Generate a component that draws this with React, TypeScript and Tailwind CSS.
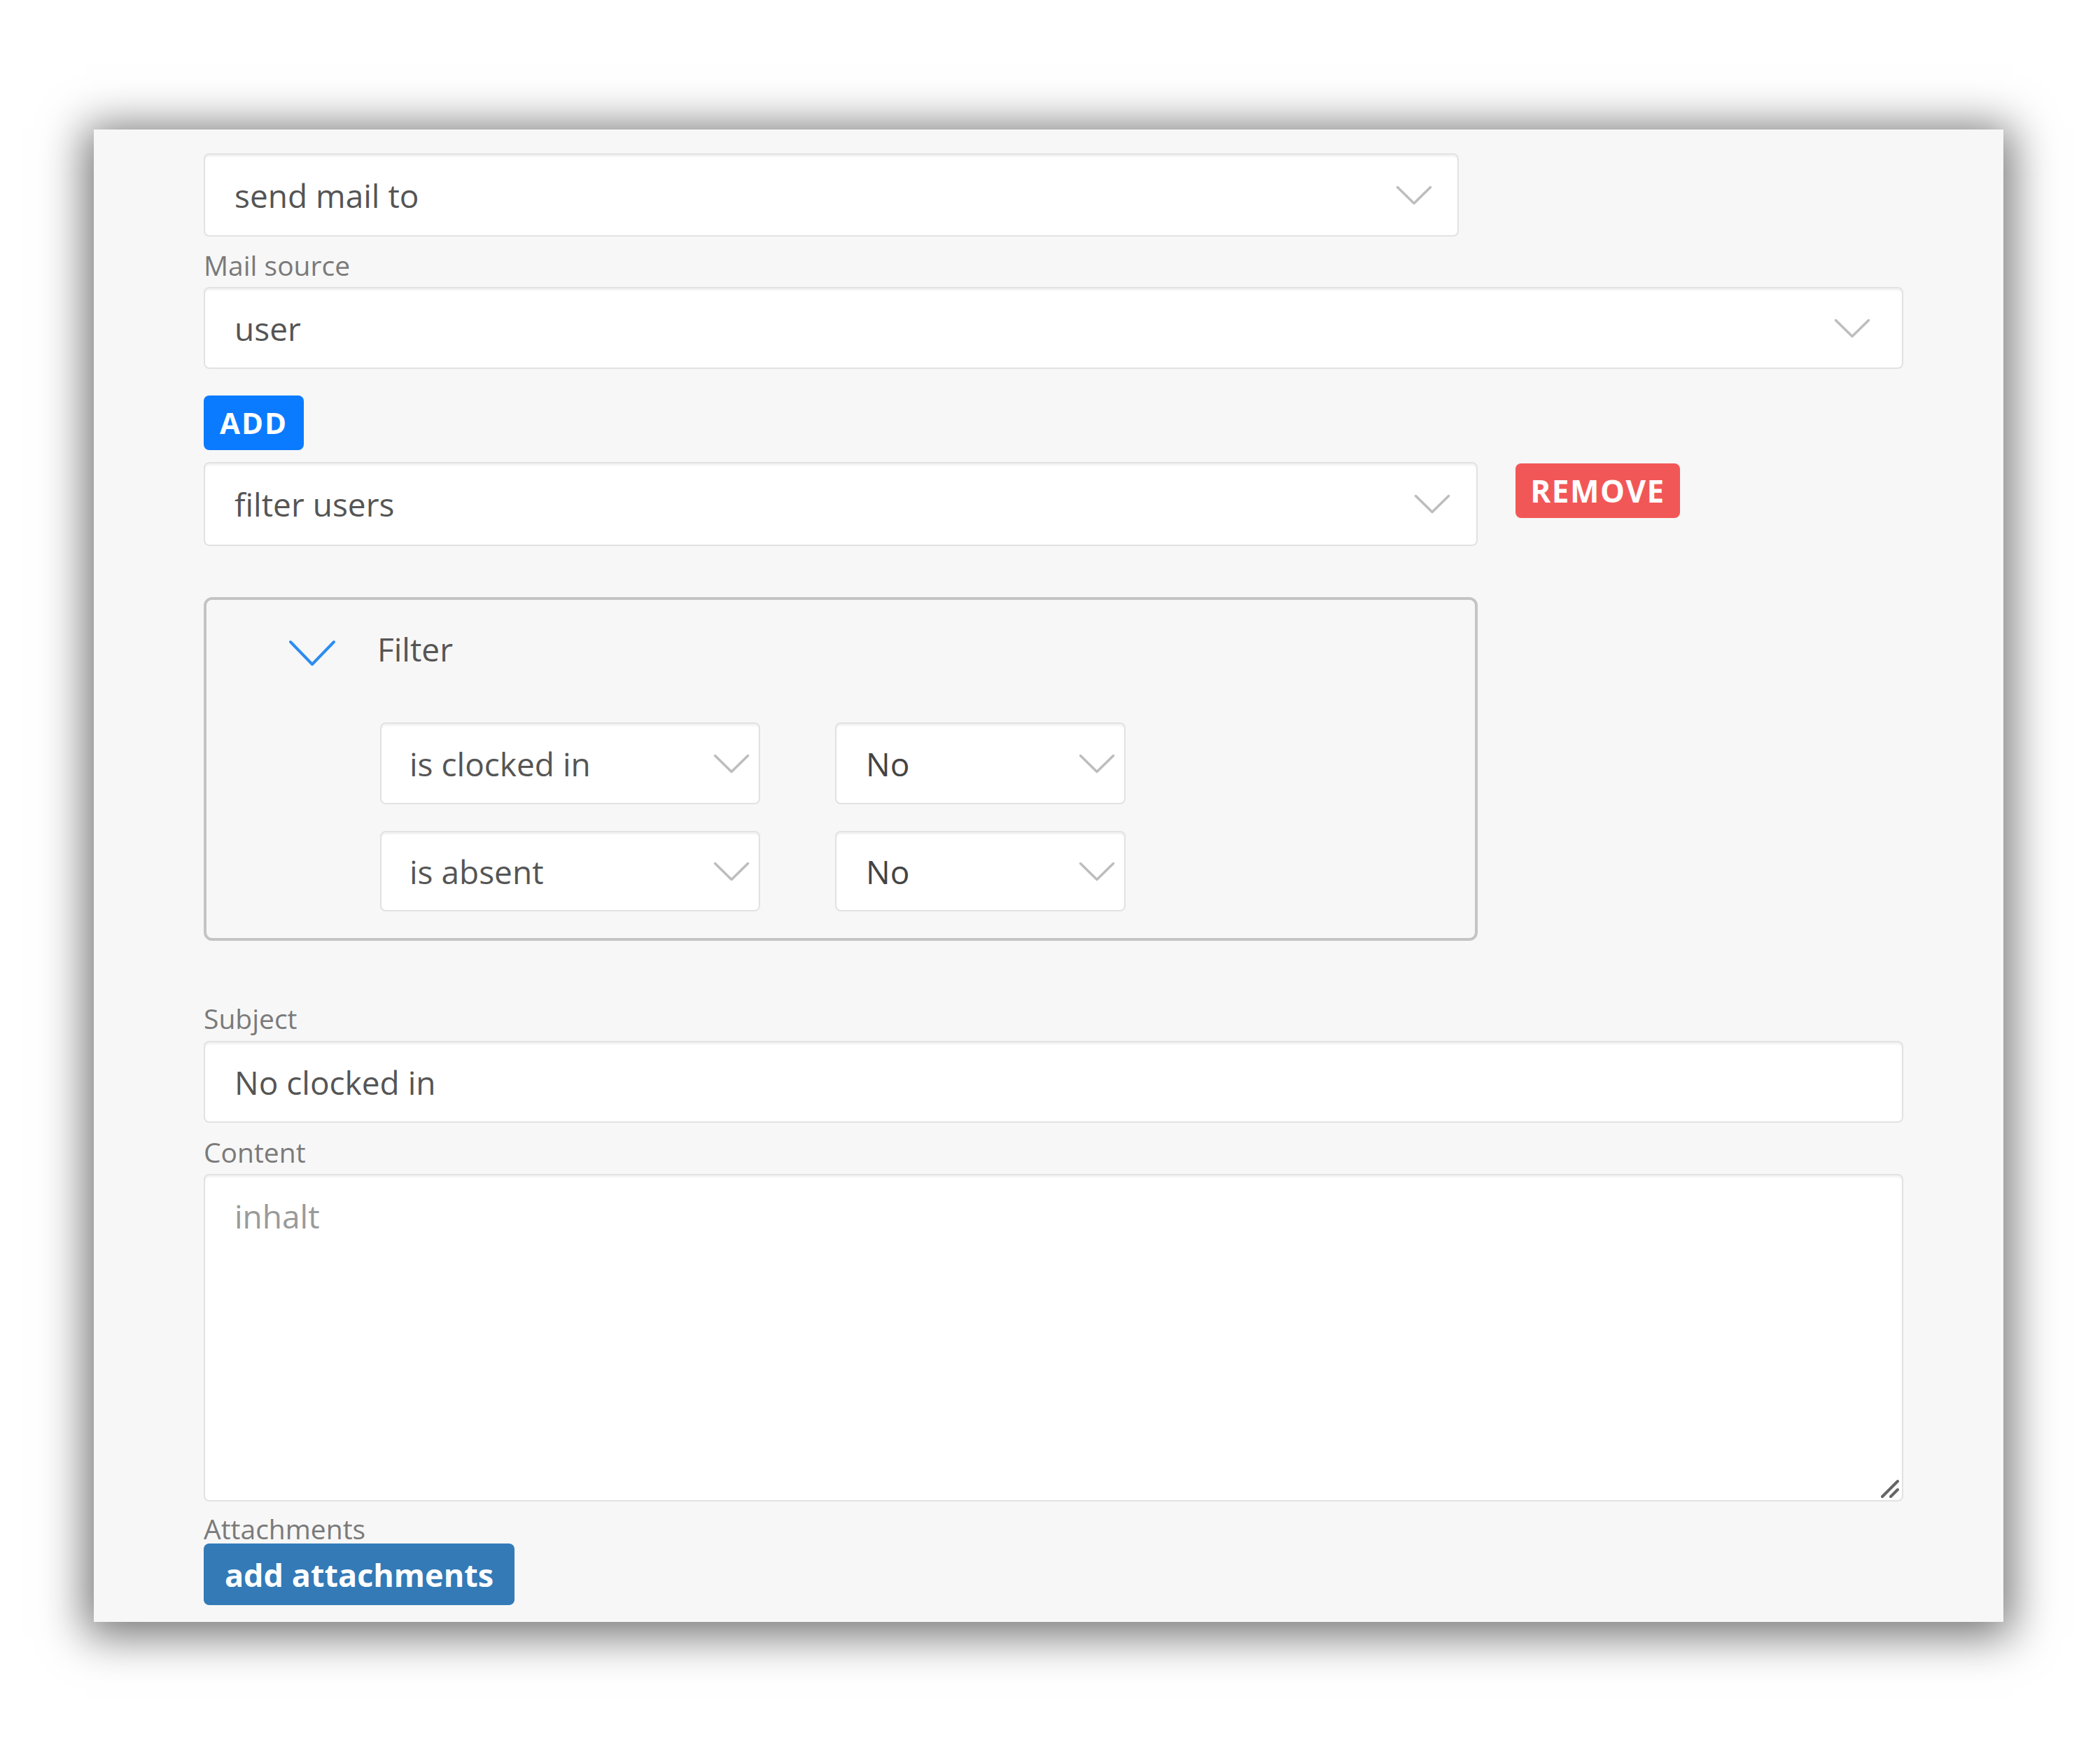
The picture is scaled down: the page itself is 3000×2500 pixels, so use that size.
import React from 'react';

const Chevron = ({ className = '', color = '#bdbdbd', w = 54, h = 30, sw = 3.5 }: { className?: string; color?: string; w?: number; h?: number; sw?: number }) => (
  <svg width={w} height={h} viewBox={`0 0 ${w} ${h}`} className={className} fill="none">
    <path d={`M${sw} ${sw} L${w / 2} ${h - sw} L${w - sw} ${sw}`} stroke={color} strokeWidth={sw} strokeLinecap="round" strokeLinejoin="round" />
  </svg>
);

const Select = ({ value, className = '', pr = 'pr-[35px]', pl = 'pl-[42px]', text = 'text-[#555]' }: { value: string; className?: string; pr?: string; pl?: string; text?: string }) => (
  <div className={`flex items-center justify-between bg-white border-2 border-[#e2e2e2] rounded-[8px] shadow-[inset_0_3px_2px_rgba(0,0,0,0.05)] ${pl} ${pr} ${className}`}>
    <span className={`text-[46px] leading-none ${text}`}>{value}</span>
    <Chevron />
  </div>
);

const Label = ({ children, className = '' }: { children: React.ReactNode; className?: string }) => (
  <div className={`text-[39px] leading-[44px] text-[#7a7a7a] ${className}`}>{children}</div>
);

export default function App() {
  return (
    <div className="min-h-[2500px] w-[3000px] bg-white pt-[185px] pl-[134px]" style={{ fontFamily: '"Open Sans", "Noto Sans", sans-serif' }}>
      <div className="w-[2728px] bg-[#f7f7f7] pt-[34px] pl-[157px] pb-[24px] shadow-[0_8px_60px_12px_rgba(0,0,0,0.55)] flex flex-col items-start">
        <Select value="send mail to" className="w-[1793px] h-[119px]" />

        <Label className="mt-[19px]">Mail source</Label>
        <Select value="user" className="w-[2428px] h-[117px] mt-[9px]" pr="pr-[44px]" />

        <button className="mt-[38px] h-[78px] w-[143px] rounded-[8px] bg-[#0a7bff] text-white font-bold text-[42px] tracking-[2px] leading-none flex items-center justify-center">
          ADD
        </button>

        <div className="mt-[17px] flex items-start gap-[54px]">
          <Select value="filter users" className="w-[1820px] h-[120px]" pr="pr-[36px]" />
          <button className="mt-[2px] h-[78px] w-[235px] rounded-[8px] bg-[#f25757] text-white font-bold text-[44px] tracking-[1.5px] leading-none flex items-center justify-center">
            REMOVE
          </button>
        </div>

        <div className="mt-[73px] w-[1820px] h-[491px] border-[4px] border-[#c4c4c4] rounded-[12px] pl-[116px] pt-[56px]">
          <div className="flex items-center">
            <Chevron color="#2d8cf0" w={70} h={40} sw={4} />
            <span className="ml-[58px] text-[46px] leading-none text-[#555] -mt-[12px]">Filter</span>
          </div>
          <div className="ml-[132px] mt-[79px] grid grid-cols-[543px_415px] gap-x-[107px] gap-y-[38px]">
            <Select value="is clocked in" className="h-[117px]" pl="pl-[40px]" pr="pr-[12px]" />
            <Select value="No" className="h-[117px]" pl="pl-[42px]" pr="pr-[12px]" text="text-[#444]" />
            <Select value="is absent" className="h-[115px]" pl="pl-[40px]" pr="pr-[12px]" />
            <Select value="No" className="h-[115px]" pl="pl-[42px]" pr="pr-[12px]" text="text-[#444]" />
          </div>
        </div>

        <Label className="mt-[89px]">Subject</Label>
        <div className="mt-[10px] w-[2428px] h-[117px] bg-white border-2 border-[#e2e2e2] rounded-[8px] shadow-[inset_0_3px_2px_rgba(0,0,0,0.05)] pl-[42px] flex items-center">
          <span className="text-[46px] leading-none text-[#555]">No clocked in</span>
        </div>

        <Label className="mt-[20px]">Content</Label>
        <div className="relative mt-[9px]">
          <textarea
            placeholder="inhalt"
            className="block w-[2428px] h-[468px] resize-none bg-white border-2 border-[#e2e2e2] rounded-[8px] shadow-[inset_0_3px_2px_rgba(0,0,0,0.05)] px-[42px] pt-[26px] text-[46px] leading-[1.4] text-[#555] placeholder:text-[#9a9a9a] outline-none"
          />
          <svg width="30" height="30" viewBox="0 0 30 30" className="absolute right-[4px] bottom-[4px]" fill="none">
            <path d="M4 27 L26 5" stroke="#666" strokeWidth="4" strokeLinecap="round" />
            <path d="M16 27 L26 17" stroke="#666" strokeWidth="4" strokeLinecap="round" />
          </svg>
        </div>

        <Label className="mt-[17px]">Attachments</Label>
        <button className="-mt-[1px] h-[88px] w-[444px] rounded-[8px] bg-[#337ab7] text-white font-bold text-[45px] leading-none flex items-center justify-center">
          add attachments
        </button>
      </div>
    </div>
  );
}
